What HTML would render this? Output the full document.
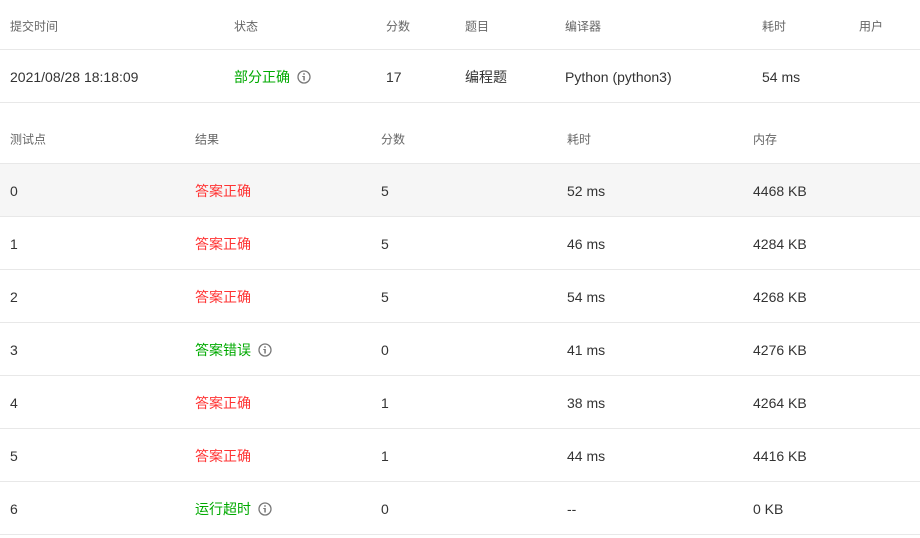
<!DOCTYPE html>
<html><head><meta charset="utf-8"><style>
*{margin:0;padding:0;box-sizing:border-box}
body{width:920px;height:538px;background:#fff;font-family:"Liberation Sans","Noto Sans CJK SC",sans-serif;font-size:14px;color:#333;position:relative;overflow:hidden}
.row{position:absolute;left:0;width:920px;border-bottom:1px solid #e8e8e8}
.row span{position:absolute;top:calc(50% + 1px);transform:translateY(-50%);white-space:nowrap;display:flex;align-items:center}
.h span{color:#666;font-size:12px}
.g{color:#0a0}
.r{color:#f33}
svg{margin-left:7px}
</style></head><body>
<div class="row h" style="top:0;height:50px">
<span style="left:10px">提交时间</span><span style="left:234px">状态</span><span style="left:386px">分数</span><span style="left:465px">题目</span><span style="left:565px">编译器</span><span style="left:762px">耗时</span><span style="left:859px">用户</span></div>
<div class="row" style="top:50px;height:53px">
<span style="left:10px">2021/08/28 18:18:09</span><span style="left:234px" class="g">部分正确<svg width="14" height="14" viewBox="0 0 14 14"><circle cx="7" cy="7" r="6" fill="none" stroke="#777" stroke-width="1.3"/><rect x="6.3" y="6" width="1.5" height="4.5" fill="#777"/><rect x="5.3" y="6" width="2" height="1" fill="#777"/><circle cx="7" cy="4" r="0.9" fill="#777"/></svg></span><span style="left:386px">17</span><span style="left:465px">编程题</span><span style="left:565px">Python (python3)</span><span style="left:762px">54 ms</span></div>
<div class="row h" style="top:103px;height:61px">
<span style="left:10px;top:36px">测试点</span><span style="left:195px;top:36px">结果</span><span style="left:381px;top:36px">分数</span><span style="left:567px;top:36px">耗时</span><span style="left:753px;top:36px">内存</span></div>
<div class="row" style="top:164px;height:53px;background:#f6f6f6"><span style="left:10px">0</span><span style="left:195px" class="r">答案正确</span><span style="left:381px">5</span><span style="left:567px">52 ms</span><span style="left:753px">4468 KB</span></div>
<div class="row" style="top:217px;height:53px"><span style="left:10px">1</span><span style="left:195px" class="r">答案正确</span><span style="left:381px">5</span><span style="left:567px">46 ms</span><span style="left:753px">4284 KB</span></div>
<div class="row" style="top:270px;height:53px"><span style="left:10px">2</span><span style="left:195px" class="r">答案正确</span><span style="left:381px">5</span><span style="left:567px">54 ms</span><span style="left:753px">4268 KB</span></div>
<div class="row" style="top:323px;height:53px"><span style="left:10px">3</span><span style="left:195px" class="g">答案错误<svg width="14" height="14" viewBox="0 0 14 14"><circle cx="7" cy="7" r="6" fill="none" stroke="#777" stroke-width="1.3"/><rect x="6.3" y="6" width="1.5" height="4.5" fill="#777"/><rect x="5.3" y="6" width="2" height="1" fill="#777"/><circle cx="7" cy="4" r="0.9" fill="#777"/></svg></span><span style="left:381px">0</span><span style="left:567px">41 ms</span><span style="left:753px">4276 KB</span></div>
<div class="row" style="top:376px;height:53px"><span style="left:10px">4</span><span style="left:195px" class="r">答案正确</span><span style="left:381px">1</span><span style="left:567px">38 ms</span><span style="left:753px">4264 KB</span></div>
<div class="row" style="top:429px;height:53px"><span style="left:10px">5</span><span style="left:195px" class="r">答案正确</span><span style="left:381px">1</span><span style="left:567px">44 ms</span><span style="left:753px">4416 KB</span></div>
<div class="row" style="top:482px;height:53px"><span style="left:10px">6</span><span style="left:195px" class="g">运行超时<svg width="14" height="14" viewBox="0 0 14 14"><circle cx="7" cy="7" r="6" fill="none" stroke="#777" stroke-width="1.3"/><rect x="6.3" y="6" width="1.5" height="4.5" fill="#777"/><rect x="5.3" y="6" width="2" height="1" fill="#777"/><circle cx="7" cy="4" r="0.9" fill="#777"/></svg></span><span style="left:381px">0</span><span style="left:567px">--</span><span style="left:753px">0 KB</span></div>
</body></html>
